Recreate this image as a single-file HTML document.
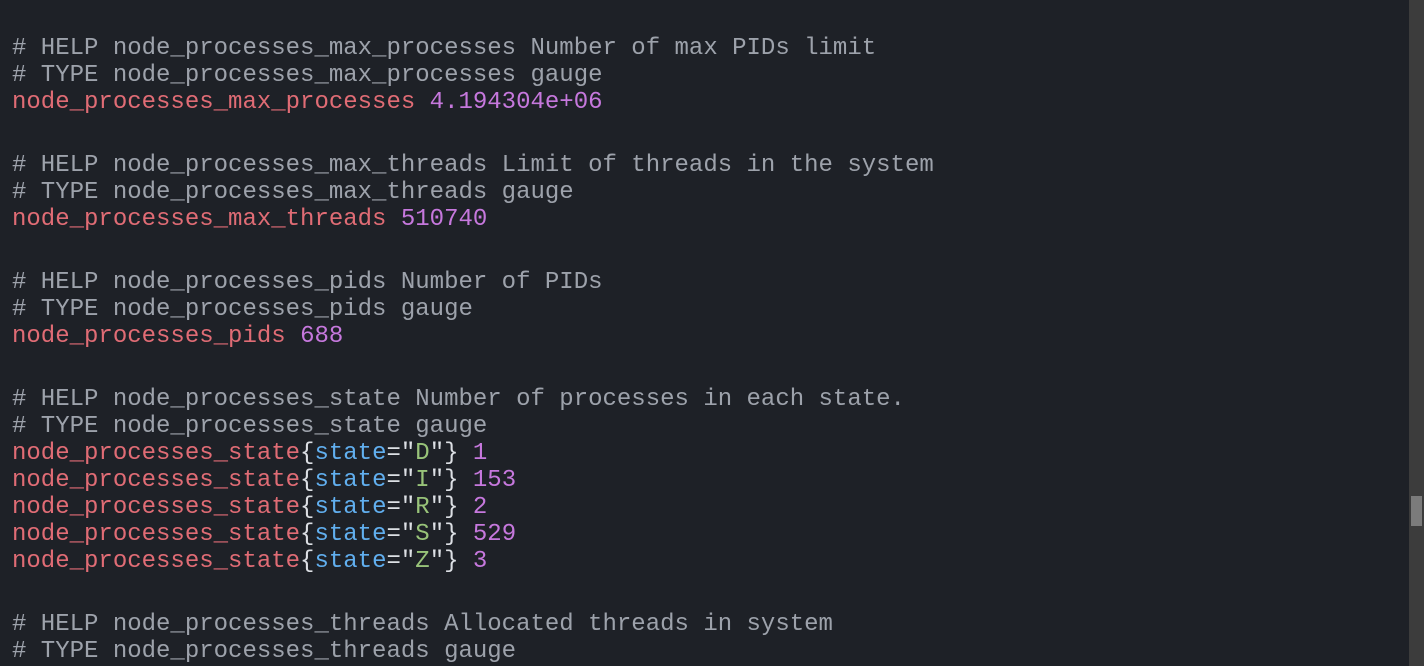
<!DOCTYPE html>
<html><head><meta charset="utf-8"><style>
html,body{margin:0;padding:0;background:#1e2127;width:1424px;height:666px;overflow:hidden}
.l{position:absolute;left:12px;font:24px/27px "Liberation Mono",monospace;white-space:pre;color:#dcdfe4}
.c{color:#9da2ab}.r{color:#e06c75}.p{color:#c678dd}.b{color:#61afef}.g{color:#98c379}
.sb{position:absolute;left:1409px;top:0;width:15px;height:666px;background:#3c3c3c}
.th{position:absolute;left:1411px;top:496px;width:11px;height:30px;background:#7b7b7b}
</style></head><body>
<div class="l c" style="top:35px"># HELP node_processes_max_processes Number of max PIDs limit</div>
<div class="l c" style="top:62px"># TYPE node_processes_max_processes gauge</div>
<div class="l" style="top:89px"><span class="r">node_processes_max_processes</span> <span class="p">4.194304e+06</span></div>
<div class="l c" style="top:152px"># HELP node_processes_max_threads Limit of threads in the system</div>
<div class="l c" style="top:179px"># TYPE node_processes_max_threads gauge</div>
<div class="l" style="top:206px"><span class="r">node_processes_max_threads</span> <span class="p">510740</span></div>
<div class="l c" style="top:269px"># HELP node_processes_pids Number of PIDs</div>
<div class="l c" style="top:296px"># TYPE node_processes_pids gauge</div>
<div class="l" style="top:323px"><span class="r">node_processes_pids</span> <span class="p">688</span></div>
<div class="l c" style="top:386px"># HELP node_processes_state Number of processes in each state.</div>
<div class="l c" style="top:413px"># TYPE node_processes_state gauge</div>
<div class="l" style="top:440px"><span class="r">node_processes_state</span>{<span class="b">state</span>="<span class="g">D</span>"} <span class="p">1</span></div>
<div class="l" style="top:467px"><span class="r">node_processes_state</span>{<span class="b">state</span>="<span class="g">I</span>"} <span class="p">153</span></div>
<div class="l" style="top:494px"><span class="r">node_processes_state</span>{<span class="b">state</span>="<span class="g">R</span>"} <span class="p">2</span></div>
<div class="l" style="top:521px"><span class="r">node_processes_state</span>{<span class="b">state</span>="<span class="g">S</span>"} <span class="p">529</span></div>
<div class="l" style="top:548px"><span class="r">node_processes_state</span>{<span class="b">state</span>="<span class="g">Z</span>"} <span class="p">3</span></div>
<div class="l c" style="top:611px"># HELP node_processes_threads Allocated threads in system</div>
<div class="l c" style="top:638px"># TYPE node_processes_threads gauge</div>
<div class="sb"></div><div class="th"></div>
</body></html>
